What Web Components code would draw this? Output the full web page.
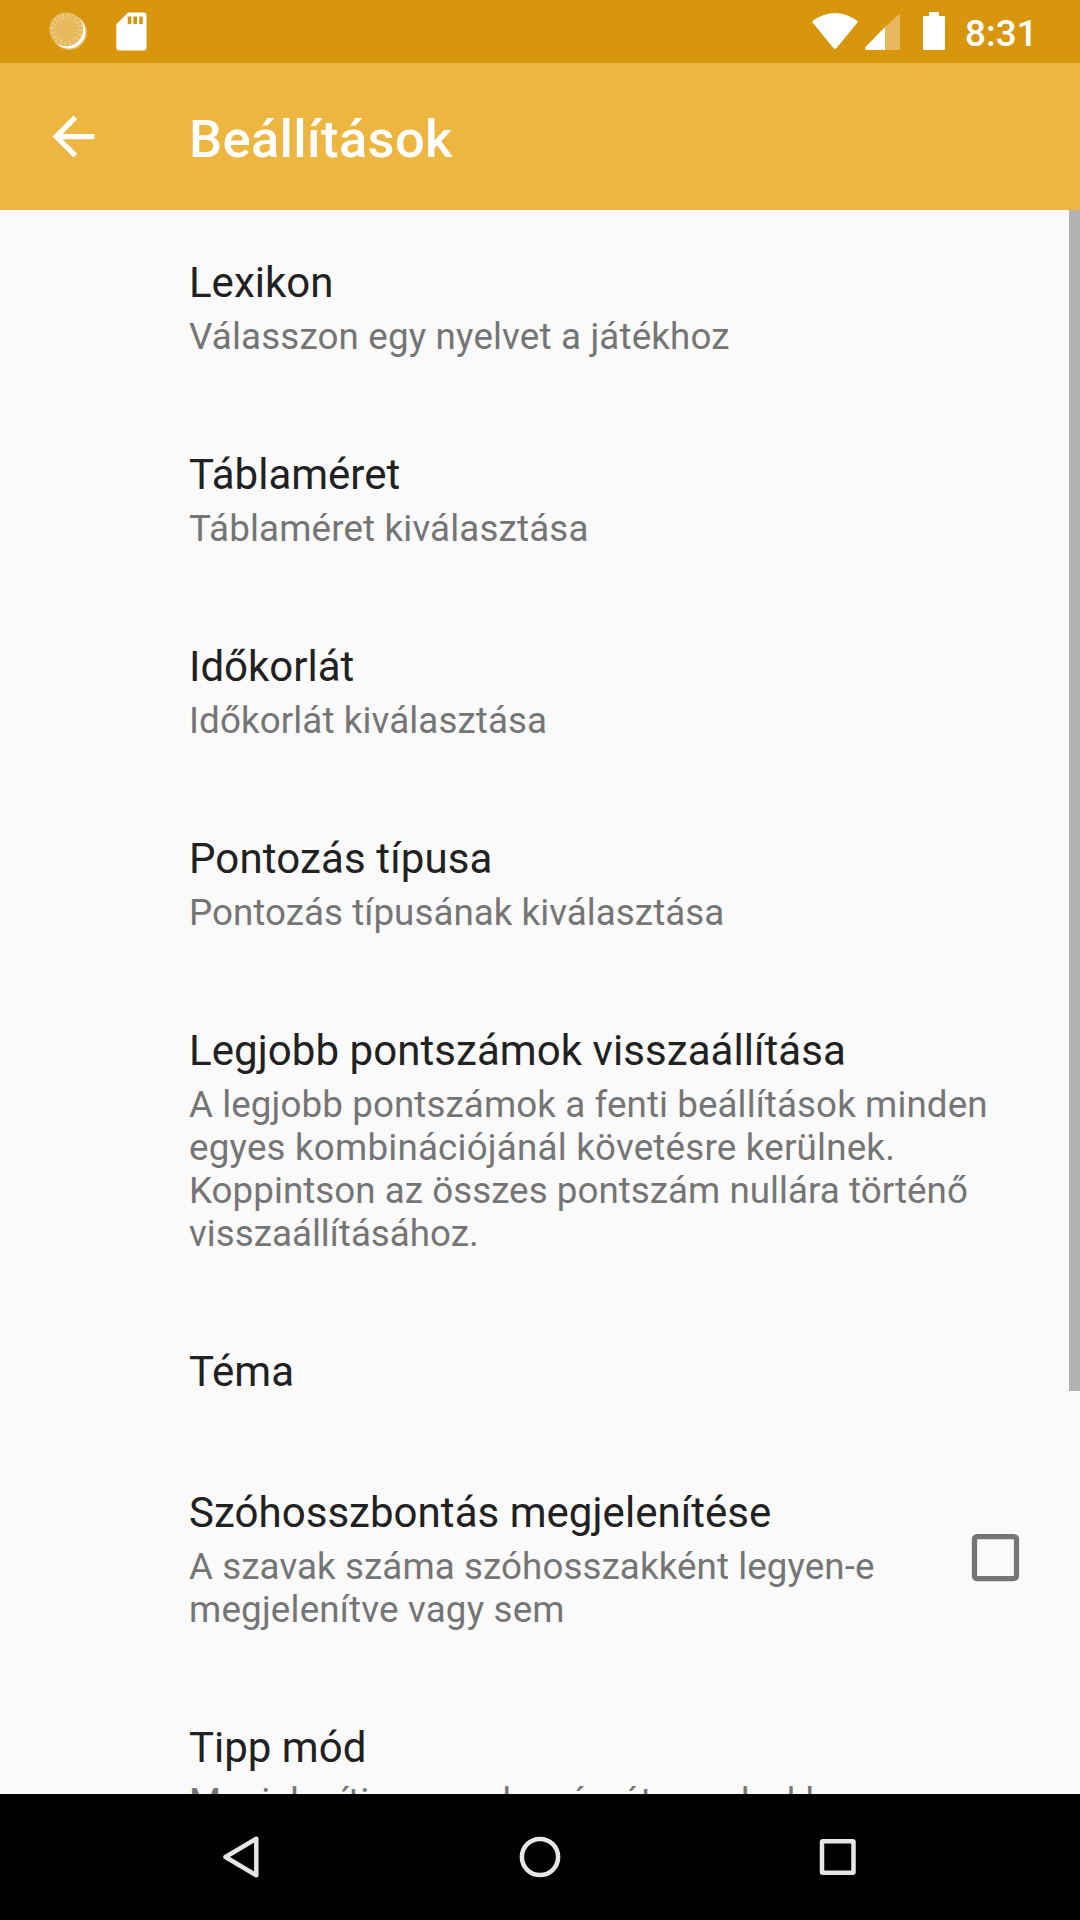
<!DOCTYPE html>
<html lang="hu">
<head>
<meta charset="utf-8">
<title>Beállítások</title>
<style>
html,body{margin:0;height:100%}
body{font-family:Roboto,sans-serif;background:#fafafa;overflow:hidden}
</style>
</head>
<body>
<settings-screen></settings-screen>
<script>
const define=(name,html)=>customElements.define(name,class extends HTMLElement{
  constructor(){super();this.attachShadow({mode:'open'}).innerHTML=html;}
});

define('status-bar',`<style>
:host{display:flex;height:63px;background:#d8960f;color:#fff;flex:none;justify-content:space-between}
svg{display:block;flex:none}
span{font-size:36.75px;font-weight:500;line-height:43px;padding-top:12px;margin-left:-7px;letter-spacing:.1px}
div{display:flex;width:300px}
</style>
<svg width="200" height="63">
<circle cx="69.300" cy="32.300" r="17.600" fill="#e6bd66"/>
<circle cx="68.700" cy="31.700" r="16.800" fill="#fff"/>
<circle cx="66.300" cy="29.300" r="16.900" fill="#e5b95c"/>
<circle cx="66.300" cy="29.300" r="13.500" fill="none" stroke="#edca83" stroke-width="5.500" stroke-dasharray="1.600 2.641"/>
<path fill="#fff" fill-rule="evenodd" d="M128 12.500H143.500Q146.500 12.500 146.500 15.500V47.500Q146.500 50.500 143.500 50.500H119.300Q116.300 50.500 116.300 47.500V24.300ZM127.700 16.500V24H131.300V16.500ZM133.400 16.500V24H137V16.500ZM139.200 16.500V24H142.800V16.500Z"/>
</svg>
<div><svg width="192" height="63" viewBox="780 0 192 63">
<path fill="#fff" d="M812.500 21Q835 5 857.500 21Q857.800 22 857 23L837 47.500Q835 50 833 47.500L813 23Q812.200 22 812.500 21Z"/>
<path fill="#e5b95c" d="M885 27L898 15.200Q900 14 900 16V48.500Q900 50 898.500 50H885Z"/>
<path fill="#fff" d="M885 27V50H866Q864.500 49 865.500 47Z"/>
<path fill="#fff" d="M929 12H939V16H944Q945 16 945 17V49Q945 50 944 50H924Q923 50 923 49V17Q923 16 924 16H929Z"/>
</svg><span>8:31</span></div>`);

define('app-bar',`<style>
:host{display:flex;align-items:center;height:147px;background:#edb641;color:#fff;flex:none}
svg{display:block;margin-left:42px;flex:none}
h1{margin:4px 0 0 84px;font-size:52.5px;line-height:62px;font-weight:500;letter-spacing:.34px}
</style>
<svg width="63" height="63" viewBox="0 0 24 24"><path fill="#fff" d="M20 11H7.830l5.590-5.590L12 4l-8 8 8 8 1.410-1.410L7.830 13H20v-2z"/></svg>
<h1><slot></slot></h1>`);

define('check-box',`<style>
:host{display:block;width:63px;height:63px;flex:none;margin-bottom:1px}svg{display:block}
</style><svg width="63" height="63" viewBox="0 0 24 24"><path fill="#757575" d="M19 5v14H5V5h14m0-2H5c-1.100 0-2 .9-2 2v14c0 1.100.9 2 2 2h14c1.100 0 2-.9 2-2V5c0-1.100-.9-2-2-2z"/></svg>`);

define('pref-item',`<style>
:host{display:flex;align-items:center;padding:0 53px 0 189px;flex:none}
.t{flex:1;padding:44px 0 40px}
.title{font-size:42px;line-height:57px;color:#212121;letter-spacing:var(--title-spacing,0)}
::slotted([slot=summary]){display:block;margin:4px 0;font-size:36.75px;line-height:43px;color:#757575}
</style>
<div class="t"><div class="title"><slot></slot></div><slot name="summary"></slot></div>
<slot name="widget"></slot>`);

define('scroll-thumb',`<style>:host{display:block;position:absolute;right:0;top:0;width:11px;height:1181px;background:#b3b3b3}</style>`);

define('nav-bar',`<style>
:host{display:block;height:126px;background:#000;flex:none}svg{display:block}
</style>
<svg width="1080" height="126" fill="none" stroke="#e6e6e6" stroke-width="4.500" stroke-linejoin="round">
<path d="M225.500 63L256.300 44.800V81.200Z"/>
<circle cx="540" cy="63" r="18.100"/>
<rect x="822" y="47.250" width="31.500" height="31.500" rx=".8"/>
</svg>`);

define('settings-screen',`<style>
:host{display:flex;flex-direction:column;width:1080px;height:1920px}
main{position:relative;flex:1;min-height:0;overflow:hidden;display:flex;flex-direction:column;background:#fafafa}
</style>
<status-bar></status-bar>
<app-bar>Beállítások</app-bar>
<main>
<pref-item>Lexikon<span slot="summary" style="letter-spacing:.16px">Válasszon egy nyelvet a játékhoz</span></pref-item>
<pref-item>Táblaméret<span slot="summary" style="letter-spacing:.15px">Táblaméret kiválasztása</span></pref-item>
<pref-item>Időkorlát<span slot="summary" style="letter-spacing:.1px">Időkorlát kiválasztása</span></pref-item>
<pref-item style="--title-spacing:.14px">Pontozás típusa<span slot="summary" style="letter-spacing:.04px">Pontozás típusának kiválasztása</span></pref-item>
<pref-item style="--title-spacing:.065px">Legjobb pontszámok visszaállítása<span slot="summary"><span style="letter-spacing:.09px">A legjobb pontszámok a fenti beállítások minden</span> <span style="letter-spacing:.2px">egyes kombinációjánál követésre kerülnek.</span> <span style="letter-spacing:.03px">Koppintson az összes pontszám nullára történő</span> visszaállításához.</span></pref-item>
<pref-item>Téma</pref-item>
<pref-item style="--title-spacing:.04px">Szóhosszbontás megjelenítése<span slot="summary"><span style="letter-spacing:.08px">A szavak száma szóhosszakként legyen-e</span> <span style="letter-spacing:.18px">megjelenítve vagy sem</span></span><check-box slot="widget"></check-box></pref-item>
<pref-item>Tipp mód<span slot="summary" style="letter-spacing:.085px">Megjeleníti a szavak számát, amelyekhez</span></pref-item>
<scroll-thumb></scroll-thumb>
</main>
<nav-bar></nav-bar>`);
</script>
</body>
</html>
